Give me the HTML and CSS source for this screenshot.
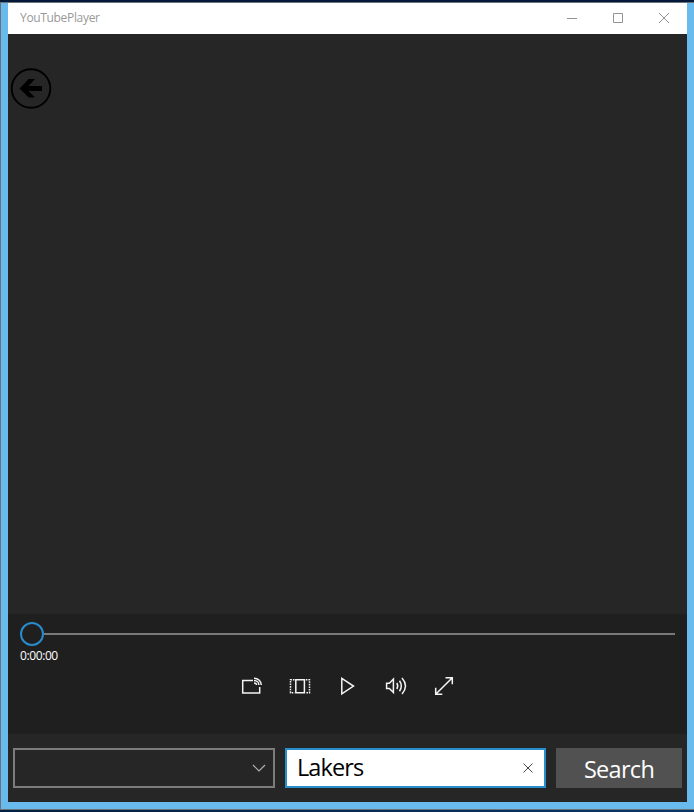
FILE: index.html
```html
<!DOCTYPE html>
<html lang="en">
<head>
<meta charset="utf-8">
<title>YouTubePlayer</title>
<link rel="stylesheet" href="styles.css">
</head>
<body>
<div class="window">
  <header class="titlebar">
    <span class="title">YouTubePlayer</span>
    <div class="controls">
      <svg width="46" height="31" viewBox="0 0 46 31"><path d="M18 15.500h10"/></svg>
      <svg width="46" height="31" viewBox="0 0 46 31"><path d="M18.500 10.500h9v9h-9z"/></svg>
      <svg width="46" height="31" viewBox="0 0 46 31"><path d="M18 10l10 10M28 10l-10 10"/></svg>
    </div>
  </header>
  <main class="stage">
    <svg class="back" width="42" height="42" viewBox="0 0 42 42">
      <circle cx="21" cy="20.500" r="19.300" fill="none" stroke="#000" stroke-width="1.900"/>
      <path d="M9.500 20.400L18.700 11H25L18.500 18H32v5H18.500L25 29.500H18.700z"/>
    </svg>
  </main>
  <section class="transport">
    <div class="slider"><span class="thumb"></span><span class="track"></span></div>
    <div class="time">0:00:00</div>
    <div class="buttons">
      <svg width="48" height="30" viewBox="0 0 48 30"><path d="M25 9.500H14.700v12.500h17v-6"/><path d="M26 7.200c4.200 0 7.300 3 7.300 6.900M26 9.600c2.800 0 4.900 2 4.900 4.500M26 12c1.500 0 2.500 .9 2.500 2.100" stroke-width="1.500"/></svg>
      <svg width="48" height="30" viewBox="0 0 48 30"><path d="M19.800 8.700h8.600v13h-8.600z"/><path d="M18.500 8.700h-4v13h4M29.800 8.700h3.700v13h-3.700" stroke-dasharray="1.600 1"/></svg>
      <svg width="48" height="30" viewBox="0 0 48 30"><path d="M17.800 7.300v15.500L29.500 15z"/></svg>
      <svg width="48" height="30" viewBox="0 0 48 30"><path d="M14.600 12.200h2.800l4-4.200v13.500l-4-4.100h-2.800z"/><path d="M24.800 12q1.900 3 0 6M27.500 9.800q3.600 5.200 0 10.400M30 7q7 8 0 16" stroke-width="1.500"/></svg>
      <svg width="48" height="30" viewBox="0 0 48 30"><path d="M15.700 23.300L32.300 6.700M25.500 6.700h6.800v6.600M15.700 16.700v6.600h6.600"/></svg>
    </div>
  </section>
  <footer class="searchbar">
    <div class="combo"><svg width="14" height="8" viewBox="0 0 14 8"><path d="M1 1l6 6 6-6"/></svg></div>
    <div class="field"><span>Lakers</span><svg width="10" height="10" viewBox="0 0 10 10"><path d="M.5 .5l9 9M9.500 .5l-9 9"/></svg></div>
    <button class="search">Search</button>
  </footer>
</div>
</body>
</html>
```
FILE: styles.css
```css
* { box-sizing: border-box; }
body {
  margin: 0;
  height: 812px;
  padding: 2px 0;
  overflow: hidden;
  background: linear-gradient(#04193a, #04193a) top / 100% 2px no-repeat, linear-gradient(90deg, #02203f, #06376b);
  font-family: "Open Sans", "Noto Sans", sans-serif;
}
svg { display: block; fill: none; flex: none; }
.window {
  display: flex;
  flex-direction: column;
  height: 808px;
  border: solid #6c737b;
  border-width: 1px 0 1px 1px;
  padding: 0 7px 7px;
  background: #69bbed;
}
.titlebar {
  display: flex;
  justify-content: space-between;
  height: 31px;
  padding-left: 12px;
  background: #fff;
}
.title { font-size: 12px; line-height: 30px; color: #999; letter-spacing: -0.33px; }
.controls { display: flex; }
.controls svg { stroke: #929292; stroke-width: 1; }
.stage { height: 580px; padding: 34px 0 0 2px; background: #262626; }
.back { fill: #000; }
.transport { height: 120px; padding: 8px 12px 0; background: #1f1f1f; color: #fff; }
.slider { display: flex; align-items: center; height: 24px; }
.thumb { width: 24px; height: 24px; border: 2px solid #288bcc; border-radius: 50%; }
.track { flex: 1; height: 2px; background: #797979; }
.time { height: 20px; font-size: 12px; line-height: 20px; letter-spacing: -0.4px; }
.buttons { display: flex; justify-content: center; margin-top: 5px; padding-left: 1px; }
.buttons svg { stroke: #f4f4f4; stroke-width: 1.5; }
.searchbar { display: flex; gap: 10px; height: 68px; padding: 14px 5px; background: #262626; }
.combo, .field { display: flex; align-items: center; height: 40px; }
.combo { width: 262px; justify-content: flex-end; padding-right: 7px; border: 2px solid #7c7c7c; }
.combo svg { stroke: #b0b0b0; stroke-width: 1.2; }
.field {
  width: 261px;
  justify-content: space-between;
  padding: 0 11px 0 10px;
  border: 2px solid #288fcf;
  background: #fff;
  color: #000;
  font-size: 23.5px;
  line-height: 34px;
  letter-spacing: -0.9px;
}
.field span { margin-top: -3px; }
.field svg { stroke: #444; }
.search {
  flex: 1;
  height: 40px;
  padding: 3px 0 0;
  border: 0;
  background: #515151;
  color: #fff;
  font: 23.5px/37px "Open Sans", "Noto Sans", sans-serif;
  letter-spacing: -0.7px;
}
```
